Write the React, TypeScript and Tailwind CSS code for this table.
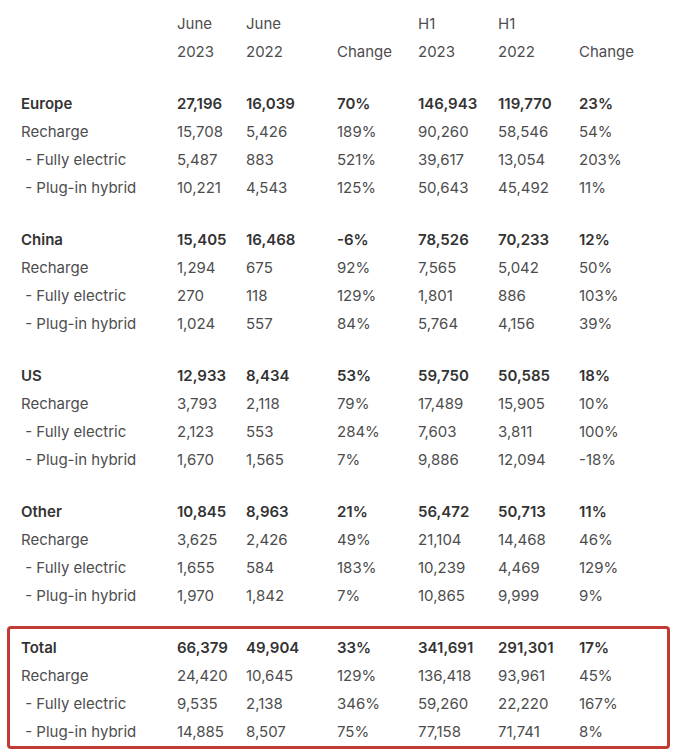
const groups = [
  {
    name: "Europe",
    rows: [
      ["27,196", "16,039", "70%", "146,943", "119,770", "23%"],
      ["15,708", "5,426", "189%", "90,260", "58,546", "54%"],
      ["5,487", "883", "521%", "39,617", "13,054", "203%"],
      ["10,221", "4,543", "125%", "50,643", "45,492", "11%"],
    ],
  },
  {
    name: "China",
    rows: [
      ["15,405", "16,468", "-6%", "78,526", "70,233", "12%"],
      ["1,294", "675", "92%", "7,565", "5,042", "50%"],
      ["270", "118", "129%", "1,801", "886", "103%"],
      ["1,024", "557", "84%", "5,764", "4,156", "39%"],
    ],
  },
  {
    name: "US",
    rows: [
      ["12,933", "8,434", "53%", "59,750", "50,585", "18%"],
      ["3,793", "2,118", "79%", "17,489", "15,905", "10%"],
      ["2,123", "553", "284%", "7,603", "3,811", "100%"],
      ["1,670", "1,565", "7%", "9,886", "12,094", "-18%"],
    ],
  },
  {
    name: "Other",
    rows: [
      ["10,845", "8,963", "21%", "56,472", "50,713", "11%"],
      ["3,625", "2,426", "49%", "21,104", "14,468", "46%"],
      ["1,655", "584", "183%", "10,239", "4,469", "129%"],
      ["1,970", "1,842", "7%", "10,865", "9,999", "9%"],
    ],
  },
];

const total = {
  name: "Total",
  rows: [
    ["66,379", "49,904", "33%", "341,691", "291,301", "17%"],
    ["24,420", "10,645", "129%", "136,418", "93,961", "45%"],
    ["9,535", "2,138", "346%", "59,260", "22,220", "167%"],
    ["14,885", "8,507", "75%", "77,158", "71,741", "8%"],
  ],
};

const subLabels = ["Recharge", " - Fully electric", " - Plug-in hybrid"];

const gridCols = "grid grid-cols-[156px_69px_91px_81px_80px_81px_1fr] h-[28px] items-center";

function Row({ label, cells, bold }: { label: string; cells: string[]; bold?: boolean }) {
  const tone = bold ? "font-semibold text-[#333333]" : "text-[#4d4d4d]";
  return (
    <div className={`${gridCols} ${tone}`}>
      <span className="whitespace-pre">{label}</span>
      {cells.map((c, i) => (
        <span key={i}>{c}</span>
      ))}
    </div>
  );
}

function Group({ name, rows }: { name: string; rows: string[][] }) {
  return (
    <div>
      <Row label={name} cells={rows[0]} bold />
      {rows.slice(1).map((r, i) => (
        <Row key={i} label={subLabels[i]} cells={r} />
      ))}
    </div>
  );
}

export default function App() {
  return (
    <div className="w-[679px] h-[749px] bg-white font-['Inter',sans-serif] text-[15px] leading-none overflow-hidden pt-[9px]">
      <div className="pl-[21px]">
        <Row label="" cells={["June", "June", "", "H1", "H1", ""]} />
        <Row label="" cells={["2023", "2022", "Change", "2023", "2022", "Change"]} />
        <div className="h-[24px]" />
        {groups.map((g) => (
          <div key={g.name} className="mb-[24px]">
            <Group name={g.name} rows={g.rows} />
          </div>
        ))}
      </div>
      {/* Total block, boxed in red */}
      <div className="ml-[7px] w-[663px] -mt-[7px] border-[3px] border-[#c23b32] rounded-[4px] pl-[11px] pt-[4px] pb-[1px]">
        <Group name={total.name} rows={total.rows} />
      </div>
    </div>
  );
}
